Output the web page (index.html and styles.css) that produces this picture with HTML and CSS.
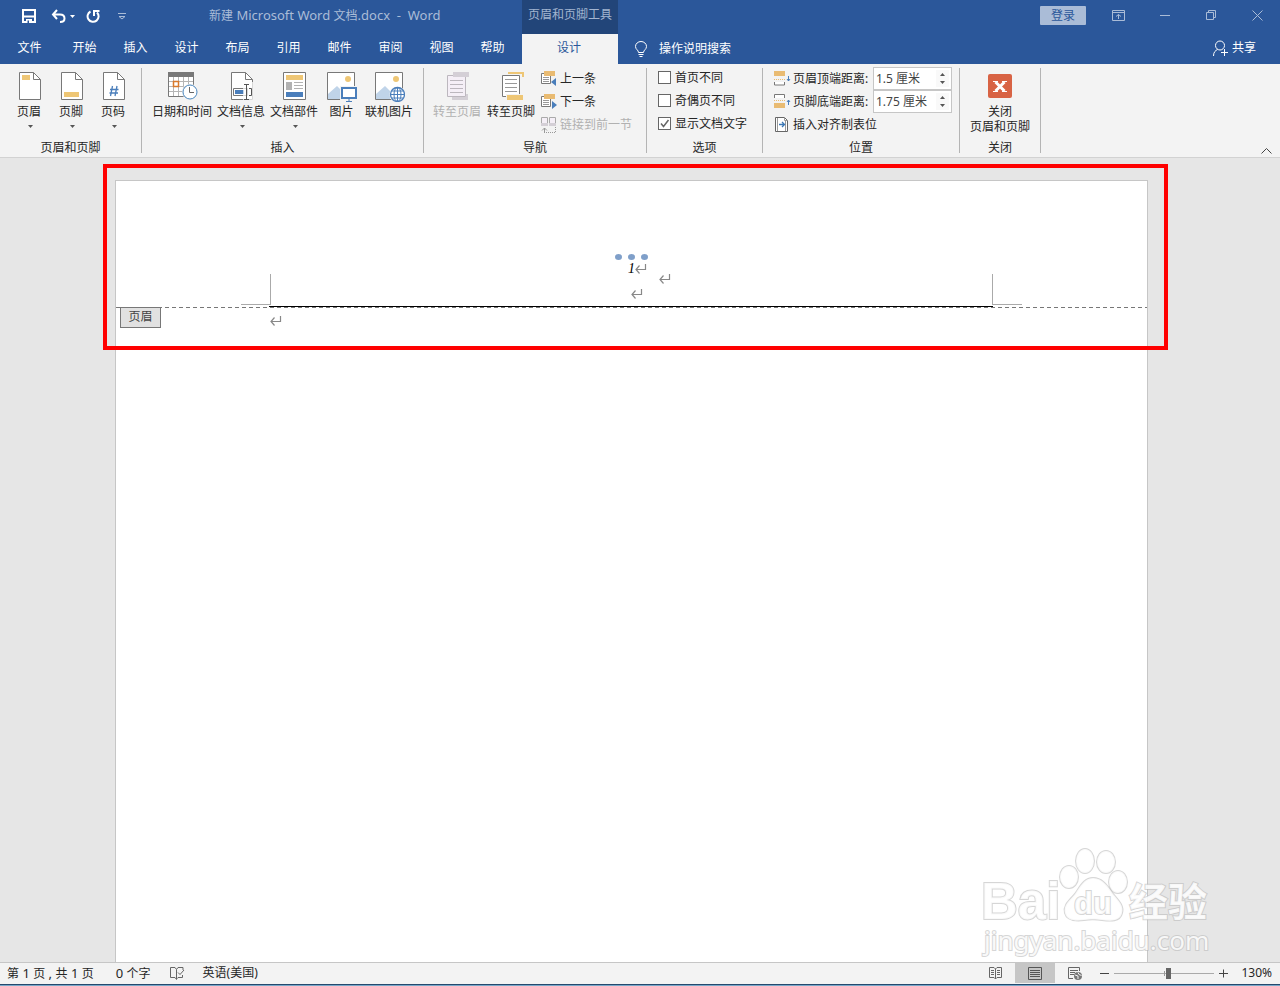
FILE: index.html
```html
<!DOCTYPE html>
<html lang="zh-CN">
<head>
<meta charset="utf-8">
<title>新建 Microsoft Word 文档.docx - Word</title>
<link rel="stylesheet" href="styles.css">
</head>
<body>
<svg class="defs" width="0" height="0" aria-hidden="true">
  <symbol id="caret" viewBox="0 0 5 3"><path d="M0 0h5L2.500 3z" fill="currentColor"/></symbol>
  <symbol id="sheet" viewBox="0 0 22 28"><path d="M.5.5h14l7 7v20H.5z" fill="#fff" stroke="#787878"/><path d="M14.500.5v7h7" fill="none" stroke="#787878"/></symbol>
  <symbol id="photo" viewBox="0 0 28 28"><path d="M.5.5h27v27H.5z" fill="#fff" stroke="#787878"/><circle cx="21" cy="7" r="3" fill="#eec675"/><path d="M1 27v-5l9-8 5 5v8z" fill="#c0d4e9"/></symbol>
  <symbol id="return" viewBox="0 0 12 10"><path d="M10.500 0v5.500H1M4.500 1.500L1 5.500 4.500 9.500" fill="none" stroke="#888" stroke-width="1.200"/></symbol>
</svg>

<header class="chrome">
  <div class="titlebar">
    <div class="title-left">
      <div class="quick">
        <button aria-label="保存"><svg width="14" height="14" viewBox="0 0 14 14"><path d="M1 1h12v12H1zM1 7.500h12" fill="none" stroke="#fff" stroke-width="2"/><path d="M4 10h6v4H4z" fill="#fff"/><path d="M5.500 11.500h1.500V14H5.500z" fill="#2b579a"/></svg></button>
        <button class="undo" aria-label="撤消"><svg width="15" height="14" viewBox="0 0 15 14"><path d="M6 1L2 5.500 6 10M2 5.500h7c3 0 4.500 1.500 4.500 4S12 13 9 13" fill="none" stroke="#fff" stroke-width="2"/></svg><svg class="caret" width="5" height="3"><use href="#caret"/></svg></button>
        <button aria-label="重复"><svg width="14" height="14" viewBox="0 0 14 14"><path d="M4.500 2.500A5.500 5.500 0 1 0 11 3.500M8 7V2h5.500" fill="none" stroke="#fff" stroke-width="2"/></svg></button>
        <button class="more" aria-label="自定义快速访问工具栏"><svg width="8" height="7" viewBox="0 0 8 7"><path d="M0 .5h8M1 3.500l3 2.500 3-2.500z" fill="none" stroke="#aabcd7"/></svg></button>
      </div>
      <div class="doc-title">新建<span class="latin"> Microsoft Word </span>文档<span class="latin">.docx&nbsp; -&nbsp; Word</span></div>
    </div>
    <div class="context">页眉和页脚工具</div>
    <div class="window-tools">
      <button class="login">登录</button>
      <button class="win" aria-label="功能区显示选项"><svg width="14" height="11" viewBox="0 0 14 11"><path d="M.5.5h12v10H.5zM1 2.500h12M6.500 9V4.500M4 6.500l2.500-2 2.500 2" fill="none" stroke="#aabcd7"/></svg></button>
      <button class="win" aria-label="最小化"><svg width="10" height="11" viewBox="0 0 10 11"><path d="M0 5.500h10" stroke="#aabcd7"/></svg></button>
      <button class="win" aria-label="还原"><svg width="10" height="11" viewBox="0 0 10 11"><path d="M.5 2.500h7v7h-7zM2.500 2V.5h7v7H8" fill="none" stroke="#aabcd7"/></svg></button>
      <button class="win" aria-label="关闭窗口"><svg width="11" height="11" viewBox="0 0 11 11"><path d="M.5.5l10 10M10.500.5l-10 10" stroke="#aabcd7"/></svg></button>
    </div>
  </div>
  <nav class="tabs">
    <button class="file">文件</button>
    <button>开始</button><button>插入</button><button>设计</button><button>布局</button><button>引用</button><button>邮件</button><button>审阅</button><button>视图</button><button>帮助</button>
    <button class="active">设计</button>
    <button class="tell"><svg width="12" height="17" viewBox="0 0 12 17"><path d="M3.500 11.500C3.500 9 .5 8.500.5 5.500a5.500 5 0 0 1 11 0c0 3-3 3.500-3 6zM3.500 13.500h5M4.500 15.500h3" fill="none" stroke="#fff"/></svg>操作说明搜索</button>
    <button class="share"><svg width="15" height="17" viewBox="0 0 15 17"><circle cx="7" cy="5.500" r="4.500" fill="none" stroke="#fff"/><path d="M.5 16c0-4 2-5.500 4-6.500M11.500 9v7M8 12.500h7" fill="none" stroke="#fff"/></svg>共享</button>
  </nav>
</header>

<section class="ribbon" aria-label="功能区">
  <div class="group g-header">
    <div class="tools">
      <button class="big"><svg width="22" height="28"><use href="#sheet"/><path d="M3 3h8v5H3z" fill="#eec675"/></svg><span>页眉</span><svg class="caret" width="5" height="3"><use href="#caret"/></svg></button>
      <button class="big"><svg width="22" height="28"><use href="#sheet"/><path d="M3 20h15v5H3z" fill="#eec675"/></svg><span>页脚</span><svg class="caret" width="5" height="3"><use href="#caret"/></svg></button>
      <button class="big"><svg width="22" height="28"><use href="#sheet"/><path d="M9.500 14l-2 10M14 14l-2 10M7 17.500h8.500M6.500 21h8.500" fill="none" stroke="#4a7ebb" stroke-width="1.300"/></svg><span>页码</span><svg class="caret" width="5" height="3"><use href="#caret"/></svg></button>
    </div>
    <div class="caption">页眉和页脚</div>
  </div>

  <div class="group g-insert">
    <div class="tools">
      <button class="big"><svg width="30" height="28" viewBox="0 0 30 28"><path d="M.5.5h25v24H.5z" fill="#fff" stroke="#787878"/><path d="M0 0h26v5H0z" fill="#787878"/><path d="M5.500 5v19M10.500 5v19M15.500 5v19M20.500 5v19M1 9.500h24M1 14.500h24M1 19.500h24" stroke="#b5b5b5"/><path d="M5.500 9.500h5v5h-5z" fill="#fff" stroke="#d9792b" stroke-width="1.500"/><circle cx="22" cy="20" r="8" fill="#f3f3f3"/><circle cx="22" cy="20" r="7" fill="#fff" stroke="#4a87bf"/><path d="M21.500 15v5.500H26" fill="none" stroke="#666"/></svg><span>日期和时间</span></button>
      <button class="big"><svg width="22" height="28" viewBox="0 0 22 28"><use href="#sheet" width="22" height="28"/><path d="M2.500 16.500h14v7h-14z" fill="#fff" stroke="#787878"/><path d="M4 18h9v4H4z" fill="#4a7ebb"/><path d="M12 10h10v18H12z" fill="#fff" opacity=".7"/><path d="M13 12.500h5M13 27.500h5M15.500 13v14M18 16.500h2.500v7H18" fill="none" stroke="#555"/></svg><span>文档信息</span><svg class="caret" width="5" height="3"><use href="#caret"/></svg></button>
      <button class="big"><svg width="23" height="28" viewBox="0 0 23 28"><path d="M.5.5h22v27H.5z" fill="#fff" stroke="#787878"/><path d="M3 3h17v5H3z" fill="#eec675"/><path d="M3 10h6v8H3z" fill="#b2b2b2"/><path d="M11 10.500h9M11 13.500h9M11 16.500h9" stroke="#b2b2b2"/><path d="M3 20h17v5H3z" fill="#4a7ebb"/></svg><span>文档部件</span><svg class="caret" width="5" height="3"><use href="#caret"/></svg></button>
      <button class="big picture"><svg width="30" height="30" viewBox="0 0 30 30"><use href="#photo" width="28" height="28"/><path d="M13 14h17v16H13z" fill="#f3f3f3"/><path d="M15 16h14v10H15z" fill="#fff" stroke="#4a7ebb" stroke-width="2"/><path d="M22 27v2M19 29.500h6" stroke="#4a7ebb"/></svg><span>图片</span></button>
      <button class="big"><svg width="30" height="30" viewBox="0 0 30 30"><use href="#photo" width="28" height="28"/><circle cx="22.500" cy="22.500" r="8" fill="#f3f3f3"/><circle cx="22.500" cy="22.500" r="7" fill="#fff" stroke="#4a7ebb" stroke-width="1.300"/><path d="M22.500 15.500v14M15.500 22.500h14M17 19h11M17 26h11" stroke="#4a7ebb"/><ellipse cx="22.500" cy="22.500" rx="3.500" ry="7" fill="none" stroke="#4a7ebb"/></svg><span>联机图片</span></button>
    </div>
    <div class="caption">插入</div>
  </div>

  <div class="group g-nav">
    <div class="tools">
      <button class="big" disabled><svg width="24" height="28" viewBox="0 0 24 28"><path d="M1.500 3.500h18v21h-18z" fill="#f5eff7" stroke="#bcb7be"/><path d="M7 0h16v5H7zM6 25h16v3H6zM20 22h2v5h-2z" fill="#d4cfd6"/><path d="M4 8.500h13M4 12.500h13M4 16.500h13M4 20.500h13" stroke="#bcb7be"/></svg><span>转至页眉</span></button>
      <button class="big"><svg width="24" height="28" viewBox="0 0 24 28"><path d="M8 0h16v5h-2V2H8z" fill="#eec675"/><path d="M2.500 3.500h17v21h-17z" fill="#fff" stroke="#787878"/><path d="M5 7.500h12M5 11.500h12M5 15.500h12M5 19.500h12" stroke="#999"/><path d="M6 22h17v6H6z" fill="#f3f3f3"/><path d="M7 23h16v5H7z" fill="#eec675"/></svg><span>转至页脚</span></button>
      <div class="stack">
        <button class="small"><svg width="16" height="15" viewBox="0 0 16 15"><path d="M.5 2.500h9v10h-9z" fill="#fff" stroke="#787878"/><path d="M2 6.500h6M2 8.500h6M2 10.500h6" stroke="#999"/><path d="M3 0h11v5H3z" fill="#e9bb72"/><path d="M15 7v8l-5-4z" fill="#4a7ebb"/></svg>上一条</button>
        <button class="small"><svg width="16" height="15" viewBox="0 0 16 15"><path d="M.5 2.500h9v10h-9z" fill="#fff" stroke="#787878"/><path d="M2 6.500h6M2 8.500h6M2 10.500h6" stroke="#999"/><path d="M3 0h11v5H3z" fill="#e9bb72"/><path d="M11 7v8l5-4z" fill="#4a7ebb"/></svg>下一条</button>
        <button class="small" disabled><svg width="16" height="16" viewBox="0 0 16 16"><path d="M.5 6V.5h6V6M8.500 6V.5h6V6" fill="#f5eff7" stroke="#aaa"/><path d="M0 6h7v3H0zM8 6h7v3H8z" fill="#d4cfd6"/><path d="M3.500 16v-5M1 13.500L3.500 11 6 13.500" fill="none" stroke="#999"/><path d="M5 15.500h9.500V10" fill="none" stroke="#999" stroke-dasharray="1 1"/></svg>链接到前一节</button>
      </div>
    </div>
    <div class="caption">导航</div>
  </div>

  <div class="group g-options">
    <div class="tools">
      <div class="stack">
        <label class="check"><input type="checkbox">首页不同</label>
        <label class="check"><input type="checkbox">奇偶页不同</label>
        <label class="check"><input type="checkbox" checked>显示文档文字</label>
      </div>
    </div>
    <div class="caption">选项</div>
  </div>

  <div class="group g-position">
    <div class="tools">
      <div class="stack">
        <div class="measure">
          <svg width="17" height="15" viewBox="0 0 17 15"><path d="M0 0h11v5H0z" fill="#e9bb72"/><path d="M0 8.500h11" stroke="#e9bb72" stroke-dasharray="1 1"/><path d="M.5 11v3h10v-3" fill="#fff" stroke="#787878"/><path d="M14.500 5v5M13 8l1.500 2L16 8" fill="none" stroke="#4a7ebb"/></svg>
          <label for="top">页眉顶端距离:</label>
          <span class="spin"><input id="top" type="text" value="1.5 厘米"><span class="steps"><button aria-label="增大页眉距离"><svg class="flip" width="5" height="3"><use href="#caret"/></svg></button><button aria-label="减小页眉距离"><svg width="5" height="3"><use href="#caret"/></svg></button></span></span>
        </div>
        <div class="measure">
          <svg width="17" height="15" viewBox="0 0 17 15"><path d="M.5 4V.5h10V4" fill="#fff" stroke="#787878"/><path d="M0 6.500h11" stroke="#e9bb72" stroke-dasharray="1 1"/><path d="M0 9h11v5H0z" fill="#e9bb72"/><path d="M14.500 11V6M13 8l1.500-2L16 8" fill="none" stroke="#4a7ebb"/></svg>
          <label for="bottom">页脚底端距离:</label>
          <span class="spin"><input id="bottom" type="text" value="1.75 厘米"><span class="steps"><button aria-label="增大页脚距离"><svg class="flip" width="5" height="3"><use href="#caret"/></svg></button><button aria-label="减小页脚距离"><svg width="5" height="3"><use href="#caret"/></svg></button></span></span>
        </div>
        <button class="small align"><svg width="14" height="15" viewBox="0 0 14 15"><path d="M.5.5h9l3 3v11H.5z" fill="#fff" stroke="#666"/><path d="M9.500.5v3h3M2.500 1v13M10.500 4v10" fill="none" stroke="#999"/><path d="M4 7.500h5M7 5l2.500 2.500L7 10" fill="none" stroke="#3d78b5" stroke-width="1.300"/></svg>插入对齐制表位</button>
      </div>
    </div>
    <div class="caption">位置</div>
  </div>

  <div class="group g-close">
    <div class="tools">
      <button class="big"><svg width="24" height="28" viewBox="0 0 24 28"><rect y="2" width="24" height="24" rx="2" fill="#d86344"/><path d="M7.500 10l9 9M16.500 10l-9 9" stroke="#fff" stroke-width="3"/><path d="M5 9.500h5M14 9.500h5M5 19.500h5M14 19.500h5" stroke="#fff"/></svg><span>关闭<br>页眉和页脚</span></button>
    </div>
    <div class="caption">关闭</div>
  </div>
  <button class="collapse" aria-label="折叠功能区"><svg width="11" height="6" viewBox="0 0 11 6"><path d="M.5 5.500l5-5 5 5" fill="none" stroke="#444"/></svg></button>
</section>

<main class="workspace">
  <article class="page">
    <div class="page-header">
      <svg class="dots" width="34" height="6" viewBox="0 0 34 6"><g fill="#7f9fc9"><ellipse cx="3.500" cy="3" rx="3.500" ry="3"/><ellipse cx="16.500" cy="3" rx="3.500" ry="3"/><ellipse cx="29.500" cy="3" rx="3.500" ry="3"/></g></svg>
      <div class="page-number">1<svg width="12" height="10"><use href="#return"/></svg></div>
      <svg class="mark-float" width="12" height="10"><use href="#return"/></svg>
      <svg class="mark-center" width="12" height="10"><use href="#return"/></svg>
      <i class="corner left"></i><i class="corner right"></i>
      <span class="header-tag">页眉</span>
    </div>
    <div class="page-body"><svg width="12" height="10"><use href="#return"/></svg></div>
  </article>
  <div class="highlight"></div>
  <svg class="watermark" width="236" height="120" viewBox="0 0 236 120" aria-label="Baidu 经验 jingyan.baidu.com">
    <g class="glow">
      <text class="wm-brand" x="1" y="79">Bai</text>
      <ellipse cx="89" cy="37" rx="9" ry="11"/><ellipse cx="105" cy="21" rx="9" ry="12"/><ellipse cx="126" cy="22" rx="9" ry="11"/><ellipse cx="138" cy="42" rx="9" ry="11"/>
      <path d="M113 38c10 0 15 9 20 16 6 7 11 12 9 19-2 9-12 8-20 7-7-1-11-1-18 0-8 1-17 1-19-7-2-8 5-13 10-19 5-7 9-16 18-16z"/>
      <text class="wm-du" x="94" y="74">du</text>
      <text class="wm-cn" x="149" y="76">经验</text>
      <text class="wm-url" x="4" y="110">jingyan.baidu.com</text>
    </g>
  </svg>
</main>

<footer class="status">
  <span>第<span class="latin"> 1 </span>页<span class="latin"> , </span>共<span class="latin"> 1 </span>页</span>
  <span class="words"><span class="latin">0 </span>个字</span>
  <button class="proof" aria-label="校对"><svg width="15" height="13" viewBox="0 0 15 13"><path d="M6.500 2.500L5 .5H.5v10H5l1.500 2V2.500L8 .5h5V3M6.500 12l1.500-1.500h4.500V8M8 5.500l2 2L14 3" fill="none" stroke="#666"/></svg></button>
  <span>英语(美国)</span>
  <div class="views">
    <button aria-label="阅读视图"><svg width="13" height="12" viewBox="0 0 13 12"><path d="M6.500 2L5 .5H.5v10H5L6.500 12 8 10.500h4.500V.5H8zV12M2 3.500h3M2 5.500h3M2 7.500h3M8 3.500h3M8 5.500h3M8 7.500h3" fill="none" stroke="#666"/></svg></button>
    <button class="on" aria-label="页面视图"><svg width="14" height="13" viewBox="0 0 14 13"><path d="M.5.5h13v12H.5zM2 3.500h10M2 5.500h10M2 7.500h10M2 9.500h10" fill="none" stroke="#555"/></svg></button>
    <button aria-label="Web 版式视图"><svg width="14" height="13" viewBox="0 0 14 13"><path d="M5 11.500H.5V.5h11V4M2 3.500h8M2 5.500h5M2 7.500h4" fill="none" stroke="#666"/><circle cx="10" cy="9" r="4" fill="#777"/><path d="M7 8l3 1v3M10 5.500l1 2 2.500 1" fill="none" stroke="#f3f3f3"/></svg></button>
  </div>
  <div class="zoom">
    <button aria-label="缩小"><svg width="9" height="9" viewBox="0 0 9 9"><path d="M0 4.500h9" stroke="#444"/></svg></button>
    <input type="range" min="0" max="100" value="54" aria-label="显示比例">
    <button aria-label="放大"><svg width="9" height="9" viewBox="0 0 9 9"><path d="M0 4.500h9M4.500.5v8" stroke="#444"/></svg></button>
    <span>130%</span>
  </div>
</footer>
</body>
</html>
```
FILE: styles.css
```css
* { box-sizing: border-box; }
body {
  margin: 0;
  min-height: 100vh;
  display: flex;
  flex-direction: column;
  font: 12px/16px "Noto Sans", "Noto Sans CJK SC", sans-serif;
  color: #262626;
  background: #e6e6e6;
}
button { font: inherit; color: inherit; background: none; border: 0; padding: 0; margin: 0; white-space: nowrap; }
svg { display: block; flex: none; }
.defs { position: absolute; }
.latin { font-size: 13px; }

.chrome { background: #2b579a; color: #fff; }
.titlebar { display: flex; height: 34px; }
.title-left { width: 522px; display: flex; }
.quick { width: 209px; display: flex; align-items: center; padding: 0 0 2px 22px; }
.quick button { margin-right: 15px; }
.quick .undo { display: flex; align-items: center; gap: 4px; margin-right: 11px; }
.quick .more { margin-left: 3px; }
.doc-title { color: #aabcd7; line-height: 30px; white-space: pre; }
.context { width: 96px; background: #224579; color: #a3b5d0; text-align: center; line-height: 30px; }
.window-tools { flex: 1; display: flex; justify-content: flex-end; align-items: center; height: 31px; }
.login { background: #aabcd7; color: #2b579a; width: 46px; height: 19px; border-radius: 1px; margin-right: 10px; }
.win { width: 46px; height: 30px; display: flex; align-items: center; justify-content: center; }

.tabs { display: flex; height: 30px; }
.tabs button { width: 51px; padding-bottom: 2px; }
.tabs .file { width: 59px; }
.tabs .active { width: 96px; margin-left: 4px; background: #f3f3f3; color: #2b579a; padding-right: 2px; }
.tabs .tell { width: auto; display: flex; align-items: center; gap: 12px; margin-left: 17px; padding: 0; }
.tabs .share { width: auto; display: flex; align-items: center; gap: 4px; margin-left: auto; margin-right: 24px; }

.ribbon { display: flex; background: #f3f3f3; border-bottom: 1px solid #d2d2d2; height: 94px; position: relative; }
.group { display: flex; flex-direction: column; justify-content: space-between; position: relative; padding-right: 1px; }
.group::after { content: ""; position: absolute; right: 0; top: 4px; bottom: 4px; width: 1px; background: #b4b4b4; }
.tools { display: flex; }
.caption { text-align: center; padding-bottom: 1px; }
.big { display: flex; flex-direction: column; align-items: center; padding-top: 8px; line-height: 15px; }
.big > svg:first-child { margin-bottom: 4px; margin-left: 1px; }
.big > svg[height="30"] { margin-bottom: 2px; }
.big .caret { margin-top: 6px; margin-left: 2px; }
.caret { color: currentColor; }
.ribbon .caret, .steps { color: #555; }
button:disabled { color: #b1b1b1; }
.g-header { width: 142px; }
.g-header .tools { padding-left: 8px; }
.g-header .big { width: 42px; }
.g-insert { width: 282px; }
.g-insert .tools { padding-left: 10px; gap: 5px; }
.picture { width: 37px; }
.g-nav { width: 223px; }
.g-nav .tools { padding-left: 9px; gap: 6px; }
.stack { display: flex; flex-direction: column; align-items: flex-start; padding-top: 3px; }
.small { display: flex; align-items: center; gap: 3px; height: 23px; }
.g-options { width: 116px; }
.g-options .tools { padding-left: 11px; }
.check { display: flex; align-items: center; gap: 4px; height: 23px; padding-bottom: 2px; }
.check input { appearance: none; width: 13px; height: 13px; margin: 0; border: 1px solid #666; background: #fff; }
.check input:checked { background: #fff url("data:image/svg+xml,%3Csvg xmlns='http://www.w3.org/2000/svg' viewBox='0 0 11 11'%3E%3Cpath d='M2 5.500l2.500 3L9.500 2' fill='none' stroke='%23666' stroke-width='1.500'/%3E%3C/svg%3E"); }
.g-position { width: 197px; }
.g-position .tools { padding-left: 11px; }
.measure { display: flex; align-items: center; height: 23px; }
.measure label { width: 80px; margin-left: 2px; white-space: nowrap; }
.spin { display: flex; width: 79px; height: 23px; border: 1px solid #c6c6c6; background: #fff; padding: 2px; }
.spin input { width: 60px; min-width: 0; border: 0; padding: 0; margin: 0; font: inherit; font-size: 12px; color: #444; background: #fff; }
.steps { flex: 1; display: flex; flex-direction: column; }
.steps button { flex: 1; display: flex; align-items: center; justify-content: center; background: #f9f9f9; }
.flip { transform: rotate(180deg); }
.align { gap: 4px; padding-left: 1px; }
.g-close { width: 81px; }
.g-close .tools { justify-content: center; }
.collapse { position: absolute; right: 8px; bottom: 3px; }

.workspace { flex: 1; position: relative; display: flex; padding: 22px 132px 0 115px; overflow: hidden; }
.page { flex: 1; background: #fff; border: 1px solid #c6c6c6; border-bottom: 0; }
.page-header { position: relative; height: 127px; padding-top: 73px; display: flex; flex-direction: column; align-items: center; }
.page-header::before { content: ""; position: absolute; left: 0; right: 0; bottom: 0; height: 1px; background: repeating-linear-gradient(90deg, #777 0 4px, transparent 4px 7px); }
.page-header::after { content: ""; position: absolute; left: 153px; right: 154px; bottom: 1px; height: 1px; background: #000; }
.page-number { display: flex; align-items: center; font: italic 14px/20px "Liberation Serif", serif; color: #000; padding-left: 12px; height: 18px; }
.mark-float { position: absolute; left: 543px; top: 93px; }
.mark-center { margin: 11px 0 0 10px; }
.corner { position: absolute; top: 93px; width: 30px; height: 31px; border-bottom: 1px solid #aaa; }
.corner.left { left: 125px; border-right: 1px solid #aaa; }
.corner.right { right: 125px; border-left: 1px solid #aaa; }
.header-tag { position: absolute; left: 4px; top: 126px; width: 41px; height: 21px; border: 1px solid #777; background: #e1e1e1; color: #444; text-align: center; line-height: 18px; }
.page-body { padding: 8px 154px; }
.highlight { position: absolute; left: 103px; right: 112px; top: 6px; height: 186px; border: 4px solid #f00; }
.watermark { position: absolute; right: 64px; bottom: 2px; }
.glow { fill: #fff; fill-opacity: .85; stroke: #bbb; stroke-opacity: .6; stroke-width: 2px; paint-order: stroke; }
.glow text { font-family: "Liberation Sans", sans-serif; font-weight: 700; }
.glow .wm-brand { font-size: 51px; }
.glow .wm-du { font-size: 31px; }
.glow .wm-cn { font-family: "Noto Sans CJK SC", sans-serif; font-size: 39px; }
.glow .wm-url { font-family: "Noto Sans", sans-serif; font-size: 26px; font-weight: 400; }

.status { display: flex; align-items: center; height: 24px; padding: 0 8px 3px 7px; background: #f3f3f3; border-top: 1px solid #c6c6c6; box-shadow: inset 0 -1px #78a7c8, inset 0 -2px #24496e; white-space: nowrap; }
.words { margin-left: 22px; }
.proof { margin: 0 18px 0 19px; }
.views { display: flex; margin-left: auto; align-self: stretch; }
.views button { width: 40px; display: flex; align-items: center; justify-content: center; }
.views .on { background: #c6c6c6; }
.zoom { display: flex; align-items: center; gap: 5px; margin-left: 5px; }
.zoom span { margin-left: 8px; }
.zoom input { appearance: none; width: 100px; height: 11px; margin: 0; background: linear-gradient(#999, #999) 50% 50% / 1px 5px no-repeat, linear-gradient(#aaa, #aaa) 0 50% / 100% 1px no-repeat; }
.zoom input::-webkit-slider-thumb { appearance: none; width: 5px; height: 11px; background: #666; }
```
